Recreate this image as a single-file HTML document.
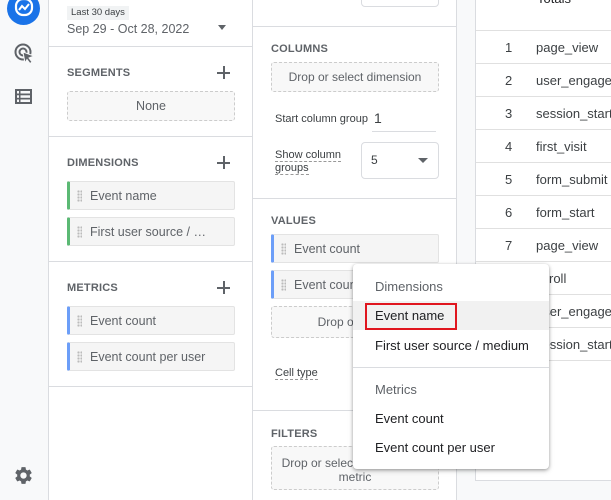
<!DOCTYPE html>
<html><head><meta charset="utf-8"><style>
*{box-sizing:border-box;margin:0;padding:0}
body{width:611px;height:500px;overflow:hidden;position:relative;background:#f8f9fa;font-family:"Liberation Sans",Roboto,sans-serif;color:#3c4043}
.a{position:absolute}
.t{font-size:12px;color:#3c4043;white-space:nowrap}
.h{font-size:11px;font-weight:bold;color:#5f6368;letter-spacing:.2px}
.chip{position:absolute;height:29px;background:#f5f5f5;border:1px solid #e3e3e3;border-radius:2px;font-size:12.5px;color:#5f6368;line-height:28px;padding-left:20px;white-space:nowrap;overflow:hidden}
.chip.g{border-left:3px solid #5bb974}
.chip.b{border-left:3px solid #6c9ef8}
.chip:before{content:"";position:absolute;left:7px;top:8px;width:5px;height:12px;background:radial-gradient(circle,#bbb 1px,transparent 1.3px) 0 0/3px 3px}
.drop{position:absolute;border:1px dashed #ccc;border-radius:3px;background:#f8f8f8;font-size:12px;color:#5f6368;text-align:center}
.plus{position:absolute;width:13px;height:13px}
.plus:before{content:"";position:absolute;left:6px;top:0;width:1.5px;height:13px;background:#5f6368}
.plus:after{content:"";position:absolute;top:6px;left:0;height:1.5px;width:13px;background:#5f6368}
.hr{position:absolute;height:1px;background:#dadce0}
.row{position:absolute;left:476px;width:135px;height:33px;border-bottom:1px solid #e0e0e0;font-size:13px;color:#3c4043;line-height:33px}
.row span{position:absolute;left:29px}
.row b{position:absolute;left:60px;font-weight:normal}
.mi{position:absolute;left:375px;font-size:13px;color:#202124}
</style></head><body>
<div class="a" style="left:48px;top:0;width:1px;height:500px;background:#dadce0"></div>
<div class="a" style="left:7px;top:-8px;width:33px;height:33px;border-radius:50%;background:#1a73e8"></div>
<svg class="a" style="left:14px;top:-2px" width="20" height="20" viewBox="0 0 20 20"><rect x="2" y="1" width="16" height="16" rx="7" fill="none" stroke="#fff" stroke-width="2.2"/><path d="M5 12 L8 8 L11 11 L15 6" stroke="#fff" stroke-width="2" fill="none"/></svg>
<svg class="a" style="left:14px;top:43px" width="22" height="22" viewBox="0 0 22 22"><circle cx="9" cy="9" r="7.5" fill="none" stroke="#5f6368" stroke-width="2"/><circle cx="9" cy="9" r="3.5" fill="none" stroke="#5f6368" stroke-width="2"/><path d="M9 9 L20 13 L15 15 L18 19 L16 20.5 L13 16.5 L11 20 Z" fill="#5f6368" stroke="#f8f9fa" stroke-width="1"/></svg>
<svg class="a" style="left:15px;top:89px" width="17" height="15" viewBox="0 0 17 15"><rect x="0" y="0" width="17" height="15" fill="#5f6368"/><g fill="#f8f9fa"><rect x="2" y="2" width="2" height="2.5"/><rect x="2" y="6.3" width="2" height="2.5"/><rect x="2" y="10.5" width="2" height="2.5"/><rect x="5.5" y="2" width="9.5" height="2.5"/><rect x="5.5" y="6.3" width="9.5" height="2.5"/><rect x="5.5" y="10.5" width="9.5" height="2.5"/></g></svg>
<svg class="a" style="left:13px;top:465px" width="21" height="21" viewBox="0 0 24 24"><path fill="#5f6368" d="M19.14 12.94c.04-.3.06-.61.06-.94 0-.32-.02-.64-.07-.94l2.030-1.58a.49.49 0 00.12-.61l-1.92-3.32a.488.488 0 00-.59-.22l-2.39.96c-.5-.38-1.030-.7-1.62-.94l-.36-2.54a.484.484 0 00-.48-.41h-3.84c-.24 0-.43.17-.47.41l-.36 2.54c-.59.24-1.13.57-1.62.94l-2.39-.96c-.22-.08-.47 0-.59.22L2.74 8.87c-.12.21-.08.47.12.61l2.03 1.58c-.05.3-.09.63-.09.94s.02.64.07.94l-2.03 1.58a.49.49 0 00-.12.61l1.92 3.32c.12.22.37.29.59.22l2.39-.96c.5.38 1.03.7 1.62.94l.36 2.54c.05.24.24.41.48.41h3.84c.24 0 .44-.17.47-.41l.36-2.54c.59-.24 1.13-.56 1.62-.94l2.39.96c.22.08.47 0 .59-.22l1.92-3.32c.12-.22.07-.47-.12-.61l-2.01-1.58zM12 15.6c-1.98 0-3.6-1.62-3.6-3.6s1.62-3.6 3.6-3.6 3.6 1.62 3.6 3.6-1.62 3.6-3.6 3.6z"/></svg>
<div class="a" style="left:49px;top:0;width:203px;height:500px;background:#fff"></div>
<div class="a" style="left:252px;top:0;width:1px;height:500px;background:#dadce0"></div>
<div class="a" style="left:67px;top:6px;width:62px;height:14px;background:#f1f3f4;font-size:9.5px;color:#3c4043;padding-left:4px;line-height:14px">Last 30 days</div>
<div class="a t" style="left:67px;top:22px;font-size:12.5px;color:#5f6368">Sep 29 - Oct 28, 2022</div>
<div class="a" style="left:218px;top:25px;border:4px solid transparent;border-top:5px solid #5f6368"></div>
<div class="hr" style="left:49px;top:46px;width:203px"></div>
<div class="a h" style="left:67px;top:67px">SEGMENTS</div>
<div class="plus" style="left:217px;top:66px"></div>
<div class="drop" style="left:67px;top:91px;width:168px;height:30px;line-height:28px;font-size:12.5px">None</div>
<div class="hr" style="left:49px;top:136px;width:203px"></div>
<div class="a h" style="left:67px;top:157px">DIMENSIONS</div>
<div class="plus" style="left:217px;top:156px"></div>
<div class="chip g" style="left:67px;top:181px;width:168px">Event name</div>
<div class="chip g" style="left:67px;top:217px;width:168px">First user source / …</div>
<div class="hr" style="left:49px;top:261px;width:203px"></div>
<div class="a h" style="left:67px;top:282px">METRICS</div>
<div class="plus" style="left:217px;top:281px"></div>
<div class="chip b" style="left:67px;top:306px;width:168px">Event count</div>
<div class="chip b" style="left:67px;top:342px;width:168px">Event count per user</div>
<div class="hr" style="left:49px;top:386px;width:203px"></div>
<div class="a" style="left:253px;top:0;width:203px;height:500px;background:#fff"></div>
<div class="a" style="left:456px;top:0;width:1px;height:500px;background:#dadce0"></div>
<div class="a" style="left:361px;top:-10px;width:78px;height:17px;border:1px solid #dadce0;border-radius:4px"></div>
<div class="hr" style="left:253px;top:26px;width:203px"></div>
<div class="a h" style="left:271px;top:43px">COLUMNS</div>
<div class="drop" style="left:271px;top:62px;width:168px;height:30px;line-height:28px">Drop or select dimension</div>
<div class="a t" style="left:275px;top:113px;font-size:11px">Start column group</div>
<div class="a" style="left:374px;top:110px;font-size:14px;color:#3c4043">1</div>
<div class="a" style="left:372px;top:131px;width:64px;height:1px;background:#dadce0"></div>
<div class="a" style="left:275px;top:149px;font-size:11px;line-height:13px;color:#3c4043"><span style="border-bottom:1px dashed #999">Show column</span><br><span style="border-bottom:1px dashed #999">groups</span></div>
<div class="a" style="left:361px;top:142px;width:78px;height:37px;border:1px solid #dadce0;border-radius:4px;font-size:12px;line-height:35px;padding-left:9px">5</div>
<div class="a" style="left:418px;top:158px;border:5px solid transparent;border-top:5px solid #5f6368"></div>
<div class="hr" style="left:253px;top:198px;width:203px"></div>
<div class="a h" style="left:271px;top:215px">VALUES</div>
<div class="chip b" style="left:271px;top:234px;width:168px">Event count</div>
<div class="chip b" style="left:271px;top:270px;width:168px">Event count</div>
<div class="drop" style="left:271px;top:306px;width:168px;height:32px;line-height:30px">Drop or select</div>
<div class="a" style="left:275px;top:367px;font-size:11px;border-bottom:1px dashed #999">Cell type</div>
<div class="hr" style="left:253px;top:410px;width:203px"></div>
<div class="a h" style="left:271px;top:428px">FILTERS</div>
<div class="drop" style="left:271px;top:446px;width:168px;height:44px;padding-top:9px;line-height:14px">Drop or select dimension or<br>metric</div>
<div class="a" style="left:475px;top:0;width:136px;height:481px;background:#fff;border-left:1px solid #dadce0;border-bottom:1px solid #dadce0"></div>
<div class="a" style="left:537px;top:-9px;font-size:13px;color:#202124">Totals</div>
<div class="hr" style="left:476px;top:30px;width:135px;background:#e0e0e0"></div>
<div class="row" style="top:31px"><span>1</span><b>page_view</b></div>
<div class="row" style="top:64px"><span>2</span><b>user_engagement</b></div>
<div class="row" style="top:97px"><span>3</span><b>session_start</b></div>
<div class="row" style="top:130px"><span>4</span><b>first_visit</b></div>
<div class="row" style="top:163px"><span>5</span><b>form_submit</b></div>
<div class="row" style="top:196px"><span>6</span><b>form_start</b></div>
<div class="row" style="top:229px"><span>7</span><b>page_view</b></div>
<div class="row" style="top:262px"><span>8</span><b>scroll</b></div>
<div class="row" style="top:295px"><span>9</span><b>user_engagement</b></div>
<div class="row" style="top:328px"><span>10</span><b>session_start</b></div>
<div class="a" style="left:353px;top:264px;width:196px;height:205px;background:#fff;border-radius:4px;box-shadow:0 1px 3px rgba(0,0,0,.3),0 2px 6px rgba(0,0,0,.15)"></div>
<div class="mi" style="top:279px;color:#5f6368">Dimensions</div>
<div class="a" style="left:353px;top:301px;width:196px;height:29px;background:#f1f1f1"></div>
<div class="a" style="left:365px;top:303px;width:92px;height:27px;border:2px solid #e0161f"></div>
<div class="mi" style="top:308px">Event name</div>
<div class="mi" style="top:338px">First user source / medium</div>
<div class="a" style="left:353px;top:367px;width:196px;height:1px;background:#dadce0"></div>
<div class="mi" style="top:382px;color:#5f6368">Metrics</div>
<div class="mi" style="top:411px">Event count</div>
<div class="mi" style="top:440px">Event count per user</div>
</body></html>
